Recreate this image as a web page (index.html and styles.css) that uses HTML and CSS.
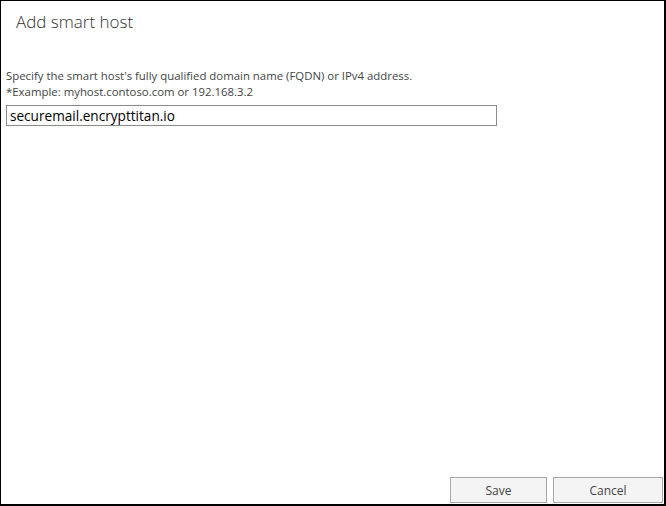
FILE: index.html
```html
<!DOCTYPE html>
<html lang="en">
<head>
  <meta charset="UTF-8">
  <title>Add smart host</title>
  <link rel="stylesheet" href="styles.css">
</head>
<body>
  <div class="dialog">
    <h1 class="titulo">Add smart host</h1>

    <div class="conteudo">
      <p class="ajuda">Specify the smart host's fully qualified domain name (FQDN) or IPv4 address.<br>*Example: myhost.contoso.com or 192.168.3.2</p>
      <input class="campo" type="text" value="securemail.encrypttitan.io">
    </div>

    <!-- botoes no rodape -->
    <div class="rodape">
      <button class="botao botao-salvar">Save</button>
      <button class="botao botao-cancelar">Cancel</button>
    </div>
  </div>
</body>
</html>
```

FILE: styles.css
```css
body {
  margin: 0;
  padding: 0;
  background: #fff;
  font-family: "Open Sans", "Noto Sans", sans-serif;
}

.dialog {
  width: 666px;
  height: 506px;
  box-sizing: border-box;
  border-style: solid;
  border-color: #000;
  border-width: 1px 2px 2px 1px;
  display: flex;
  flex-direction: column;
}

.titulo {
  margin: 10px 0 0 15px;
  font-size: 17px;
  font-weight: 300;
  color: #333;
  line-height: 22px;
}

.conteudo {
  padding: 0 0 0 5px;
  margin-top: 35px;
}

.ajuda {
  margin: 0;
  font-size: 11.4px;
  line-height: 16px;
  color: #444;
}

.campo {
  display: block;
  margin-top: 5px;
  width: 491px;
  height: 21px;
  box-sizing: border-box;
  border: 1px solid #8a8a8a;
  padding: 0 3px;
  font-family: inherit;
  font-size: 13.6px;
  color: #000;
  outline: none;
}

.rodape {
  margin-top: auto;
  display: flex;
  justify-content: flex-end;
  gap: 6px;
  padding: 0 1px 1px 0;
}

.botao {
  height: 26px;
  box-sizing: border-box;
  background: #f4f4f4;
  border: 1px solid #a8a8a8;
  font-family: inherit;
  font-size: 12px;
  color: #444;
  padding: 0;
}

.botao-salvar {
  width: 97px;
}

.botao-cancelar {
  width: 110px;
}
```
